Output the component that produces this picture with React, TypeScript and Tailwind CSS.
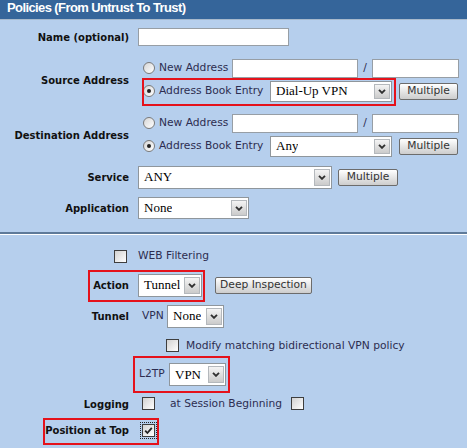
import type { ReactNode } from 'react'

const label = "w-[130px] shrink-0 pr-[1px] text-right font-bold text-[10px] text-[#111]"
const txt = "text-[10.7px] text-[#2d2d50] whitespace-nowrap"

function Radio({ checked }: { checked?: boolean }) {
  return (
    <span className="w-[12px] h-[12px] shrink-0 rounded-full border border-[#7a7a7a] bg-gradient-to-br from-[#d6d6d6] to-white flex items-center justify-center">
      {checked && <span className="w-[4px] h-[4px] rounded-full bg-[#222]" />}
    </span>
  )
}

function Check({ checked }: { checked?: boolean }) {
  return (
    <span className={`w-[13px] h-[13px] shrink-0 border border-[#3e3e3e] bg-gradient-to-br from-[#d2d2d2] to-white flex items-center justify-center ${checked ? 'outline-1 outline-dotted outline-[#222] outline-offset-[1px]' : ''}`}>
      {checked && (
        <svg width="11" height="11" viewBox="0 0 11 11">
          <path d="M2.2 5.6 L4.4 8 L8.8 2.8" stroke="#222" strokeWidth="1.8" fill="none" />
        </svg>
      )}
    </span>
  )
}

function Input({ w, h = 'h-[19px]' }: { w: string; h?: string }) {
  return <span className={`${w} ${h} shrink-0 bg-white border border-[#979ea5] block`} />
}

function Select({ w, h, value }: { w: string; h: string; value: string }) {
  return (
    <div className={`${w} ${h} shrink-0 bg-white border border-[#8f969c] flex items-center`}>
      <span className="pl-[5px] font-['Liberation_Serif',serif] text-[13px] text-black whitespace-nowrap overflow-hidden">{value}</span>
      <span className="ml-auto mr-[1px] w-[16px] h-[calc(100%-4px)] border border-[#b4b8bc] bg-gradient-to-b from-[#f4f4f4] to-[#cbcbcb] flex items-center justify-center">
        <svg width="8" height="5" viewBox="0 0 8 5">
          <path d="M1 0.8 L4 3.8 L7 0.8" stroke="#303030" strokeWidth="1.9" fill="none" />
        </svg>
      </span>
    </div>
  )
}

function Btn({ w, children }: { w: string; children: ReactNode }) {
  return (
    <span className={`${w} h-[17px] shrink-0 rounded-[2px] border border-[#6c6c6c] bg-gradient-to-b from-white to-[#cdcdcd] flex items-center justify-center text-[10.7px] text-[#333] whitespace-nowrap`}>
      {children}
    </span>
  )
}

function Row({ name, h, mt, children }: { name?: ReactNode; h: string; mt: string; children: ReactNode }) {
  return (
    <div className={`flex items-center ${h} ${mt}`}>
      <div className={label}>{name}</div>
      <div className="ml-[8px] flex items-center">{children}</div>
    </div>
  )
}

function AddressBlock({ mt, entry, boxed }: { mt: string; entry: string; boxed?: boolean }) {
  return (
    <div className={`flex items-center ${mt}`}>
      <div className={label}>{boxed ? 'Source Address' : 'Destination Address'}</div>
      <div className="ml-[8px] flex flex-col">
        <div className="h-[22px] flex items-center">
          <span className="w-[94px] pl-[5px] flex items-center gap-[4px]">
            <Radio />
            <span className={txt}>New Address</span>
          </span>
          <Input w="w-[126px]" />
          <span className={`w-[14px] text-center ${txt}`}>/</span>
          <Input w="w-[87px]" />
        </div>
        <div className="h-[24px] flex items-center">
          <span className="w-[132px] pl-[5px] flex items-center gap-[4px]">
            <Radio checked />
            <span className={txt}>Address Book Entry</span>
          </span>
          <Select w="w-[122px]" h="h-[21px]" value={entry} />
          <span className="ml-[7px]"><Btn w="w-[59px]">Multiple</Btn></span>
        </div>
      </div>
    </div>
  )
}

const redBox = "absolute border-2 border-[#e5121b] pointer-events-none"

export default function App() {
  return (
    <div className="relative w-[467px] h-[448px] overflow-hidden bg-[#b6cfed] font-['DejaVu_Sans',Verdana,sans-serif]">
      <div className="h-[20px] bg-[#35659a] border-b border-[#a7b9cc] pl-[7px] font-['Liberation_Sans',Arial,sans-serif] font-bold text-[13px] leading-[16px] tracking-[-0.6px] text-white">
        Policies (From Untrust To Trust)
      </div>

      <Row name="Name (optional)" h="h-[20px]" mt="mt-[7px]">
        <Input w="w-[151px]" h="h-[18px]" />
      </Row>

      <AddressBlock mt="mt-[10px]" entry="Dial-Up VPN" boxed />
      <AddressBlock mt="mt-[9px]" entry="Any" />

      <Row name="Service" h="h-[24px]" mt="mt-[7px]">
        <Select w="w-[194px]" h="h-[23px]" value="ANY" />
        <span className="ml-[6px]"><Btn w="w-[60px]">Multiple</Btn></span>
      </Row>
      <Row name="Application" h="h-[24px]" mt="mt-[7px]">
        <Select w="w-[111px]" h="h-[22px]" value="None" />
      </Row>

      {/* section divider */}
      <div className="mt-[12px] h-[2px] bg-[#5e7a99]" />
      <div className="h-[1px] bg-white" />

      <div className="flex items-center h-[20px] mt-[11px]">
        <div className="w-[130px] shrink-0 pr-[3px] flex justify-end"><Check /></div>
        <span className={`ml-[8px] ${txt}`}>WEB Filtering</span>
      </div>

      <Row name="Action" h="h-[24px]" mt="mt-[7px]">
        <Select w="w-[64px]" h="h-[23px]" value="Tunnel" />
        <span className="ml-[13px]"><Btn w="w-[97px]">Deep Inspection</Btn></span>
      </Row>

      <Row name="Tunnel" h="h-[24px]" mt="mt-[7px]">
        <span className={`w-[29px] pl-[4px] ${txt}`}>VPN</span>
        <Select w="w-[57px]" h="h-[23px]" value="None" />
      </Row>

      <Row h="h-[20px]" mt="mt-[8px]">
        <span className="ml-[28px]"><Check /></span>
        <span className={`ml-[7px] ${txt}`}>Modify matching bidirectional VPN policy</span>
      </Row>

      <Row h="h-[23px]" mt="mt-[7px]">
        <span className={`w-[31px] pl-[1px] ${txt}`}>L2TP</span>
        <Select w="w-[57px]" h="h-[23px]" value="VPN" />
      </Row>

      <Row name="Logging" h="h-[20px]" mt="mt-[8px]">
        <span className="ml-[4px]"><Check /></span>
        <span className={`ml-[15px] ${txt}`}>at Session Beginning</span>
        <span className="ml-[9px]"><Check /></span>
      </Row>

      <Row name="Position at Top" h="h-[20px]" mt="mt-[6px]">
        <span className="ml-[4px]"><Check checked /></span>
      </Row>

      {/* highlight marks */}
      <div className={`${redBox} left-[142px] top-[78px] w-[254px] h-[28px]`} />
      <div className={`${redBox} left-[88px] top-[270px] w-[117px] h-[32px]`} />
      <div className={`${redBox} left-[133px] top-[356px] w-[97px] h-[37px]`} />
      <div className={`${redBox} left-[43px] top-[418px] w-[116px] h-[27px]`} />
    </div>
  )
}
